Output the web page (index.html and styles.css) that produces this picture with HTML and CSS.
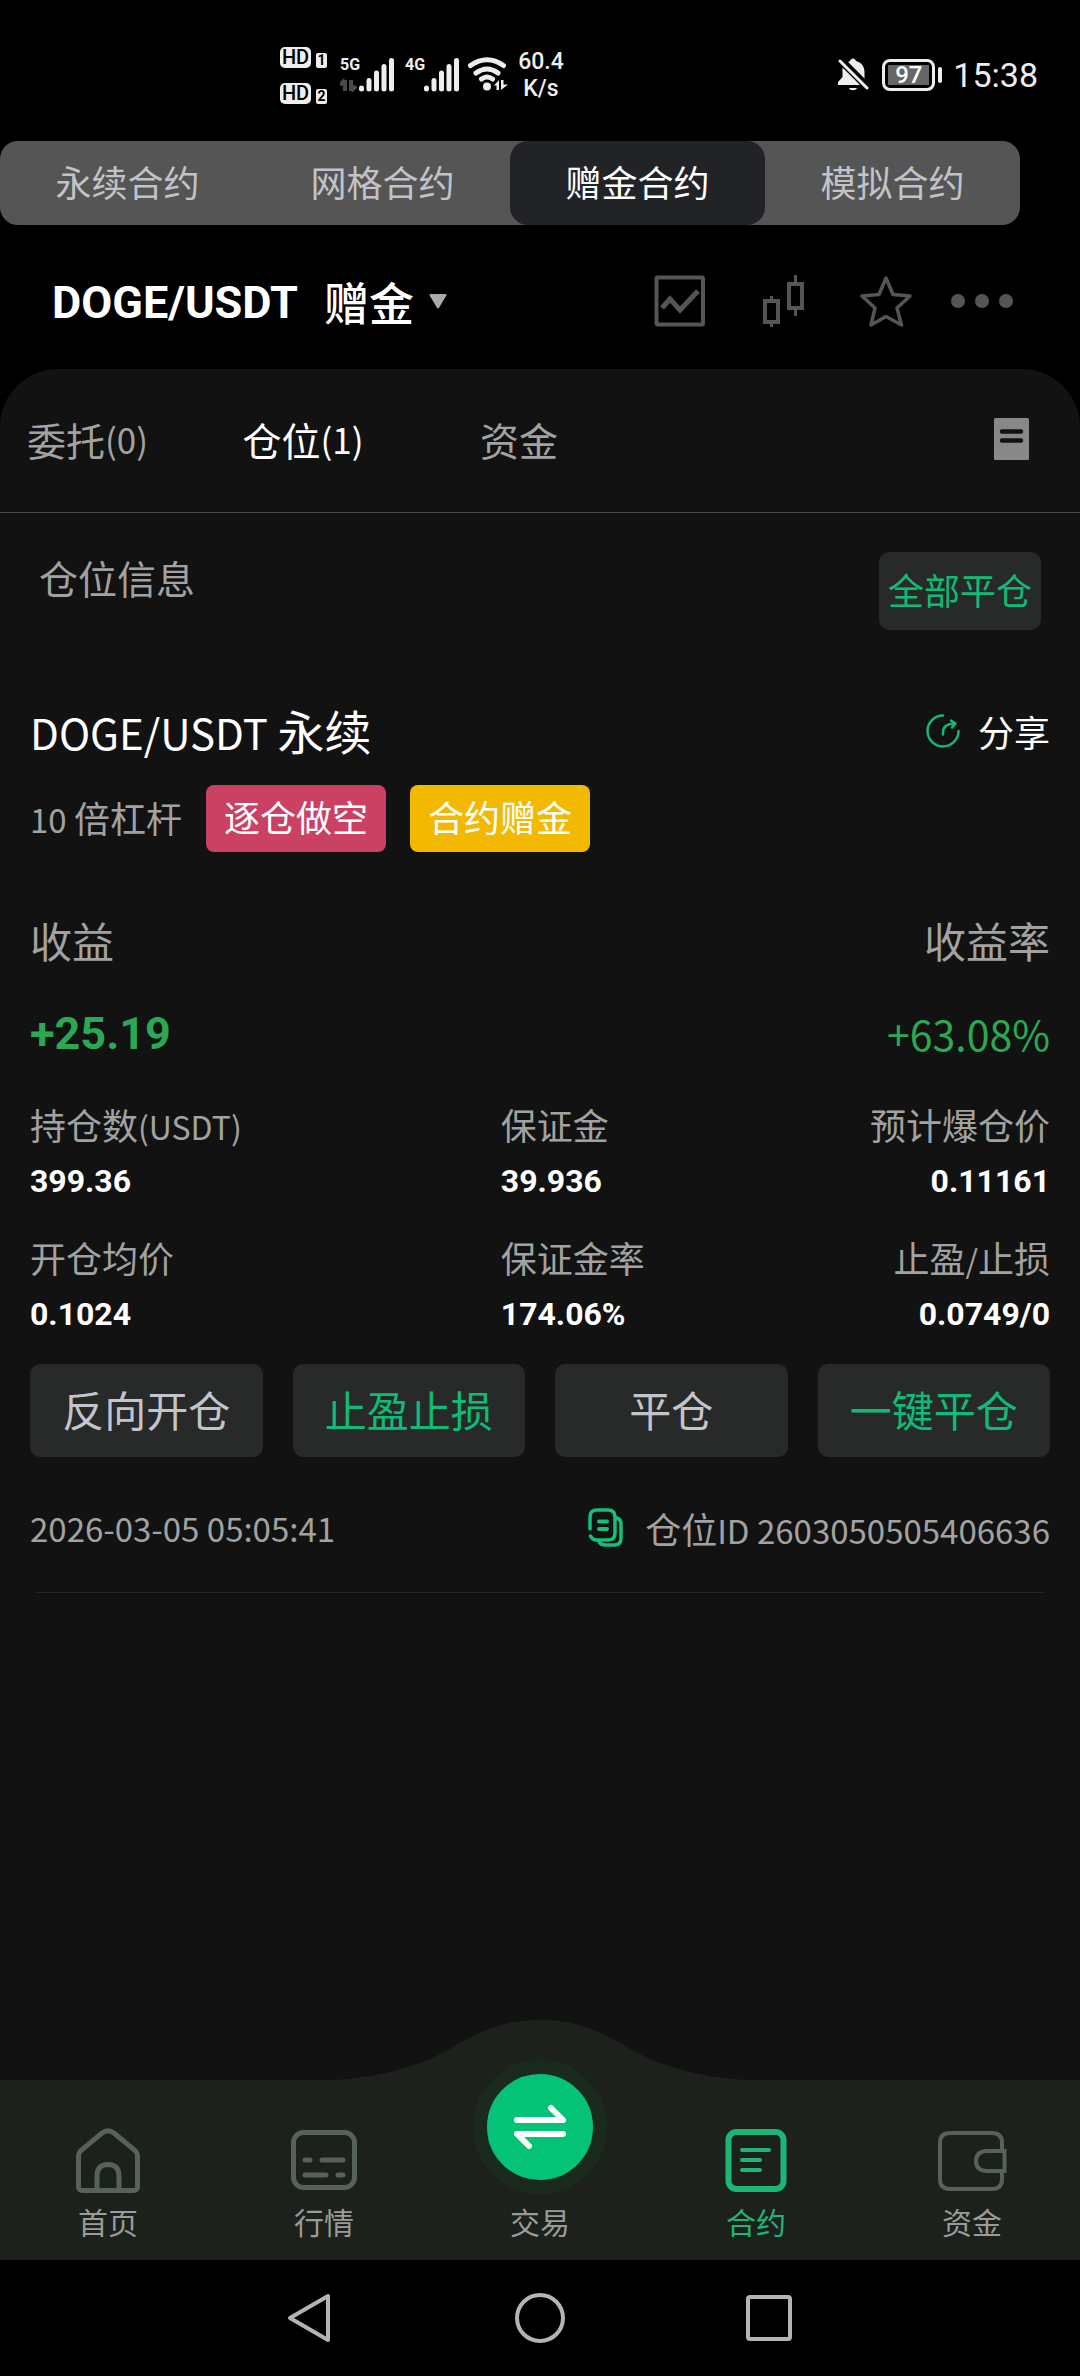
FILE: index.html
```html
<!DOCTYPE html>
<html lang="zh-CN">
<head>
<meta charset="utf-8">
<meta name="viewport" content="width=device-width, initial-scale=1">
<title>DOGE/USDT 赠金合约</title>
<link rel="stylesheet" href="styles.css">
</head>
<body>
<div class="app">
  <div class="status">
    <div class="hd-list">
      <div class="hd-row"><span class="hd">HD</span><span class="sim">1</span></div>
      <div class="hd-row"><span class="hd">HD</span><span class="sim">2</span></div>
    </div>
    <div class="signal signal-5g">
      <span class="net">5G</span>
      <svg width="54" height="34" viewBox="0 0 54 34"><path d="M5 22v11M0 27l5-5M11 22v11M11 33l5-5" stroke="#4a4a4a" stroke-width="4" fill="none"/><path d="M21.500 30v1M29 22.500v8.500M36.500 15v16M44 8.500V31M51.500 2.500V31" stroke="#eee" stroke-width="5" stroke-linecap="round"/></svg>
    </div>
    <div class="signal signal-4g">
      <span class="net">4G</span>
      <svg width="54" height="34" viewBox="0 0 54 34"><path d="M21.500 30v1M29 22.500v8.500M36.500 15v16M44 8.500V31M51.500 2.500V31" stroke="#eee" stroke-width="5" stroke-linecap="round"/></svg>
    </div>
    <svg class="wifi" width="40" height="34" viewBox="0 0 40 34"><g fill="none" stroke="#eee" stroke-width="5" stroke-linecap="round"><path d="M2.500 8.500Q19 -3 35.500 8.500"/><path d="M8 16Q19 8 30 16"/><path d="M13.500 22Q19 18 24.500 22"/></g><circle cx="19" cy="29.500" r="4" fill="#eee"/><path d="M26 28.500L31 23V33h-2.500v-4.500zM33 23h2.500v4.500H40L33 33z" fill="#eee"/></svg>
    <div class="speed"><span>60.4</span><span>K/s</span></div>
    <div class="status-right">
      <svg width="32" height="34" viewBox="0 0 32 34"><path fill="#eee" d="M4.500 9.500L22 27H0v-3l4.500-5zM9 4.500l3-1.500c1-3.500 5-3.500 6 0 6 1.500 8.500 6 8.500 11v8zM11 30h8c-1 3-7 3-8 0z"/><path d="M5 1l26 26" stroke="#000" stroke-width="3"/><path d="M2 3l27 27" stroke="#eee" stroke-width="3" stroke-linecap="round"/></svg>
      <span class="battery"><span class="level">97</span></span>
      <span class="clock">15:38</span>
    </div>
  </div>

  <nav class="segments">
    <button type="button">永续合约</button>
    <button type="button">网格合约</button>
    <button type="button" class="active">赠金合约</button>
    <button type="button">模拟合约</button>
  </nav>

  <header class="pair-bar">
    <button type="button" class="pair"><strong>DOGE/USDT</strong><span>赠金</span>
      <svg width="18" height="15" viewBox="0 0 18 15"><path d="M1.500 1h15L9 13.500z" fill="#aaa" stroke="#aaa" stroke-width="2" stroke-linejoin="round"/></svg>
    </button>
    <div class="tools">
      <button type="button" aria-label="图表"><svg width="52" height="52" viewBox="0 0 52 52" fill="none" stroke="#555" stroke-width="4"><rect x="2.500" y="2.500" width="46.500" height="47" rx="1"/><path d="M8 33l8-9 10 11 18-19" stroke-width="5"/></svg></button>
      <button type="button" aria-label="K线"><svg width="52" height="52" viewBox="0 0 52 52" fill="none" stroke="#555"><path d="M14.500 21v4M14.500 47v5M38.500 0v8M38.500 34v7" stroke-width="3"/><rect x="8" y="26" width="13" height="21" stroke-width="4"/><rect x="32" y="9" width="13" height="24" stroke-width="4"/></svg></button>
      <button type="button" aria-label="收藏"><svg width="52" height="52" viewBox="0 0 52 52" fill="none" stroke="#555" stroke-width="3.500" stroke-linejoin="round"><path d="M26 3l7 16.500 17 1.500-13 12 4.500 17L26 41.500 11 50l4-17L2 21l17-1.500z"/></svg></button>
      <button type="button" aria-label="更多"><svg width="62" height="52" viewBox="0 0 62 52" fill="#555"><circle cx="7" cy="26" r="7"/><circle cx="31" cy="26" r="7"/><circle cx="55" cy="26" r="7"/></svg></button>
    </div>
  </header>

  <main class="panel">
    <div class="tabs">
      <button type="button">委托<span class="latin">(0)</span></button>
      <button type="button" class="active">仓位<span class="latin">(1)</span></button>
      <button type="button">资金</button>
      <button type="button" class="records" aria-label="记录"><svg width="35" height="42" viewBox="0 0 35 42"><rect width="35" height="42" rx="1.500" fill="#888"/><path d="M8 13.500h19M8 22.500h19" stroke="#121212" stroke-width="4.500" stroke-linecap="round"/></svg></button>
    </div>

    <div class="section-head">
      <h2>仓位信息</h2>
      <button type="button" class="close-all">全部平仓</button>
    </div>

    <article class="position">
      <div class="title-row">
        <h3><span class="latin">DOGE/USDT </span>永续</h3>
        <button type="button" class="share"><svg width="34" height="36" viewBox="0 0 34 36" fill="none" stroke="#12b877" stroke-width="2.500" stroke-linecap="round" stroke-linejoin="round"><path d="M17 2.500A15.500 15.500 0 1 0 32.500 18"/><path d="M17 21.500V19q0-8 12-8.500M25 7.500l4.500 3-3.500 4"/></svg>分享</button>
      </div>
      <div class="tag-row">
        <span class="leverage"><span class="latin">10 </span>倍杠杆</span>
        <span class="tag tag-short">逐仓做空</span>
        <span class="tag tag-bonus">合约赠金</span>
      </div>
      <div class="profit-labels"><span>收益</span><span>收益率</span></div>
      <div class="profit-values"><strong>+25.19</strong><span>+63.08%</span></div>
      <dl class="stats">
        <div><dt>持仓数<span class="latin">(USDT)</span></dt><dd>399.36</dd></div>
        <div><dt>保证金</dt><dd>39.936</dd></div>
        <div><dt>预计爆仓价</dt><dd>0.11161</dd></div>
        <div><dt>开仓均价</dt><dd>0.1024</dd></div>
        <div><dt>保证金率</dt><dd>174.06%</dd></div>
        <div><dt>止盈<span class="latin">/</span>止损</dt><dd>0.0749/0</dd></div>
      </dl>
      <div class="actions">
        <button type="button">反向开仓</button>
        <button type="button" class="green">止盈止损</button>
        <button type="button">平仓</button>
        <button type="button" class="green">一键平仓</button>
      </div>
      <div class="meta">
        <time class="latin" datetime="2026-03-05T05:05:41">2026-03-05 05:05:41</time>
        <button type="button" class="copy"><svg width="35" height="39" viewBox="0 0 35 39" fill="none" stroke="#12c079" stroke-width="3.500" stroke-linecap="round"><path d="M2 21V9q0-7 7-7h11q7 0 7 7v16q0 7-7 7H9q-4.500 0-6.500-4"/><path d="M29 10q4 1.500 4 6v14q0 7-7 7H17q-4.500 0-6-3.500"/><path d="M11 13.500h8M11 21h8" stroke-width="4"/></svg><span>仓位<span class="latin">ID 2603050505406636</span></span></button>
      </div>
    </article>
  </main>

  <nav class="tabbar">
    <svg class="bump" width="460" height="61" viewBox="0 0 460 61"><path d="M0 61Q85 60 138 30C165 14 190 0 230 0S295 14 322 30Q375 60 460 61z"/></svg>
    <a href="#home"><svg width="66" height="66" viewBox="0 0 66 66" fill="none" stroke="#566356" stroke-width="5"><path d="M3.500 28Q3.500 25 6 22.500L27 5q6-4.500 12 0l21 17.500Q62.500 25 62.500 28v30.500q0 4-4 4h-51q-4 0-4-4z"/><path d="M22 62V48q0-11.500 11-11.500T44 48v14"/></svg>首页</a>
    <a href="#market"><svg width="66" height="66" viewBox="0 0 66 66" fill="none" stroke="#566356" stroke-width="5"><rect x="2.500" y="4.500" width="61" height="55" rx="10"/><path d="M14 32h5M31 32h21M14 47h21M47 47h5" stroke-linecap="round"/></svg>行情</a>
    <a href="#trade"><span class="trade"><svg width="54" height="48" viewBox="0 0 54 48" fill="none" stroke="#fff" stroke-width="6" stroke-linecap="round" stroke-linejoin="round"><path d="M4 17h46L38 5M50 31H4l12 12"/></svg></span>交易</a>
    <a href="#contract" class="active"><svg width="66" height="66" viewBox="0 0 66 66" fill="none" stroke="#1fb577" stroke-width="6"><rect x="5.500" y="4" width="55" height="57" rx="8"/><path d="M19 22h27M19 32h18M19 42h18" stroke-width="4" stroke-linecap="round"/></svg>合约</a>
    <a href="#assets"><svg width="70" height="66" viewBox="0 0 70 66" fill="none" stroke="#566356" stroke-width="4"><path d="M65 22v-7q0-10-10-10H13Q3 5 3 15v36q0 10 10 10h42q10 0 10-10v-8"/><path d="M67.500 23H49q-10 1-10 10t10 10h18.500z"/></svg>资金</a>
  </nav>

  <div class="system-nav">
    <button type="button" aria-label="返回"><svg width="52" height="52" viewBox="0 0 52 52" fill="none" stroke="#b4b4b4" stroke-width="4" stroke-linejoin="round"><path d="M43 4v44L5 26z"/></svg></button>
    <button type="button" aria-label="主页"><svg width="52" height="52" viewBox="0 0 52 52" fill="none" stroke="#b4b4b4" stroke-width="4"><circle cx="26" cy="26" r="23"/></svg></button>
    <button type="button" aria-label="最近任务"><svg width="52" height="52" viewBox="0 0 52 52" fill="none" stroke="#b4b4b4" stroke-width="4"><rect x="5" y="5" width="42" height="42" rx="2"/></svg></button>
  </div>
</div>
</body>
</html>
```
FILE: styles.css
```css
* { box-sizing: border-box; }

body {
  margin: 0;
  background: #000;
  color: #a2a2a2;
  font-family: "Noto Sans CJK SC", sans-serif;
  font-size: 36px;
}

button {
  display: flex;
  align-items: center;
  justify-content: center;
  padding: 0;
  border: 0;
  background: none;
  color: inherit;
  font: inherit;
}

h2, h3, dl, dt, dd { margin: 0; font-weight: 400; }
svg { display: block; flex: none; }
.latin { font-size: 32px; white-space: pre; }

.app {
  display: flex;
  flex-direction: column;
  min-height: 100vh;
}

/* status bar */
.status {
  display: flex;
  align-items: flex-start;
  height: 141px;
  padding: 47px 42px 0 280px;
  color: #eee;
  font-family: Roboto, sans-serif;
}
.hd-list { display: flex; flex-direction: column; gap: 15px; width: 60px; }
.hd-row { display: flex; align-items: flex-end; gap: 5px; }
.hd {
  width: 31px;
  border-radius: 5px;
  background: #eee;
  color: #000;
  font-size: 20px;
  font-weight: 500;
  line-height: 21px;
  text-align: center;
}
.sim {
  width: 11px;
  border-radius: 2px;
  background: #eee;
  color: #000;
  font-size: 14px;
  font-weight: 700;
  line-height: 15px;
  text-align: center;
}
.signal { position: relative; width: 65px; padding-top: 11px; }
.net {
  position: absolute;
  top: 8px;
  left: 0;
  font-size: 16px;
  font-weight: 700;
  line-height: 20px;
}
.wifi { margin: 10px 10px 0 -2px; }
.speed {
  display: flex;
  flex-direction: column;
  width: 46px;
  padding-top: 1px;
  font-size: 23px;
  font-weight: 500;
  line-height: 27px;
  text-align: center;
}
.status-right {
  display: flex;
  align-items: center;
  gap: 12px;
  margin: 11px 0 0 auto;
}
.battery {
  position: relative;
  width: 53px;
  height: 32px;
  margin-right: 6px;
  padding: 3px;
  border: 3px solid #eee;
  border-radius: 8px;
}
.battery::after {
  content: "";
  position: absolute;
  top: 5px;
  right: -10px;
  width: 4px;
  height: 16px;
  border-radius: 2px;
  background: #eee;
}
.level {
  display: block;
  background: #666;
  color: #fff;
  font-size: 24px;
  font-weight: 500;
  line-height: 20px;
  text-align: center;
}
.clock { font-size: 34px; font-weight: 400; line-height: 34px; }

/* contract type switch */
.segments {
  display: grid;
  grid-template-columns: repeat(4, 1fr);
  height: 84px;
  margin-right: 60px;
  border-radius: 18px;
  background: #555;
  color: #c3c2c8;
}
.segments button { padding-bottom: 4px; border-radius: 18px; }
.segments .active { background: #222327; color: #fff; }

/* pair header */
.pair-bar {
  display: flex;
  align-items: center;
  justify-content: space-between;
  height: 144px;
  padding: 8px 67px 0 52px;
}
.pair { color: #fff; font-size: 45px; font-weight: 500; }
.pair strong {
  padding-top: 4px;
  font: 700 45px/60px Roboto, sans-serif;
}
.pair span { margin: 0 15px 0 26px; }
.tools { display: flex; align-items: center; gap: 51px; }
.tools button:last-child { margin-left: -12px; }

/* main panel */
.panel {
  flex: 1;
  border-radius: 58px 58px 0 0;
  background: #121212;
}
.tabs {
  display: grid;
  grid-template-columns: 195px 216px 216px 1fr;
  height: 144px;
  border-bottom: 1px solid #4a4a4a;
  font-size: 39px;
}
.tabs button { padding-bottom: 4px; }
.tabs button:first-child { justify-content: flex-start; padding-left: 27px; }
.tabs .latin { font-size: 35px; }
.tabs .active { color: #fff; }
.tabs .records { justify-content: flex-end; padding-right: 51px; }

.section-head {
  display: flex;
  align-items: flex-start;
  justify-content: space-between;
  padding: 39px 39px 0;
}
.section-head h2 { font-size: 39px; line-height: 50px; }
.close-all {
  width: 162px;
  height: 78px;
  padding-bottom: 4px;
  border-radius: 10px;
  background: #282929;
  color: #0fbb76;
}

.position { padding: 73px 30px 0; }
.title-row {
  display: flex;
  align-items: center;
  justify-content: space-between;
  height: 60px;
  padding-bottom: 4px;
  color: #fff;
}
.title-row h3 { font-size: 47px; line-height: 56px; }
.title-row .latin { font-size: 42px; }
.share { gap: 18px; }
.tag-row {
  display: flex;
  align-items: center;
  gap: 24px;
  margin-top: 22px;
}
.leverage { padding-bottom: 4px; }
.leverage .latin { font-size: 33px; }
.tag {
  padding: 0 18px 4px;
  border-radius: 8px;
  color: #fff;
  line-height: 63px;
}
.tag-short { background: #cb4163; }
.tag-bonus { background: #f3b900; }

.profit-labels, .profit-values {
  display: flex;
  justify-content: space-between;
  font-size: 42px;
  line-height: 50px;
}
.profit-labels { margin-top: 63px; }
.profit-values { margin-top: 44px; color: #2aa853; }
.profit-values strong { font-family: Roboto, sans-serif; font-size: 45px; }
.profit-values span { font-size: 41px; line-height: 48px; }

.stats {
  display: grid;
  grid-template-columns: 6fr 4fr 3fr;
  row-gap: 34px;
  margin-top: 45px;
  line-height: 44px;
  white-space: nowrap;
}
.stats > div { display: flex; flex-direction: column; gap: 11px; }
.stats > div:nth-child(3n) { align-items: flex-end; }
.stats dt { height: 44px; line-height: 40px; }
.stats dd {
  color: #fff;
  font-family: Roboto, sans-serif;
  font-size: 32px;
  font-weight: 700;
}

.actions {
  display: grid;
  grid-template-columns: repeat(4, 1fr);
  gap: 30px;
  margin-top: 28px;
}
.actions button {
  height: 93px;
  padding-bottom: 4px;
  border-radius: 10px;
  background: #282929;
  color: #c4c4cc;
  font-size: 42px;
}
.actions .green { color: #0fbb76; }

.meta {
  display: flex;
  align-items: center;
  justify-content: space-between;
  height: 136px;
  margin: 0 6px;
  padding-top: 6px;
  border-bottom: 1px solid #232323;
}
.meta .latin { font-size: 33px; }
.meta time { margin-left: -6px; }
.copy { gap: 22px; margin-right: -6px; }

/* bottom tab bar */
.tabbar {
  position: relative;
  display: grid;
  grid-template-columns: repeat(5, 1fr);
  grid-template-rows: 180px;
  height: 180px;
  background: #1c211c;
}
.bump {
  position: absolute;
  top: -60px;
  left: 50%;
  margin-left: -230px;
  fill: #1c211c;
}
.tabbar a {
  position: relative;
  display: flex;
  flex-direction: column;
  align-items: center;
  justify-content: flex-end;
  gap: 5px;
  padding-bottom: 17px;
  color: #999c98;
  font-size: 30px;
  line-height: 44px;
  text-decoration: none;
}
.tabbar .active { color: #1fb577; }
.trade {
  display: grid;
  flex: none;
  place-items: center;
  width: 134px;
  height: 134px;
  border: 14px solid #1a2b1d;
  border-radius: 50%;
  background: #05c376;
}

/* system navigation */
.system-nav {
  display: flex;
  align-items: center;
  justify-content: center;
  gap: 177px;
  height: 116px;
}
```
